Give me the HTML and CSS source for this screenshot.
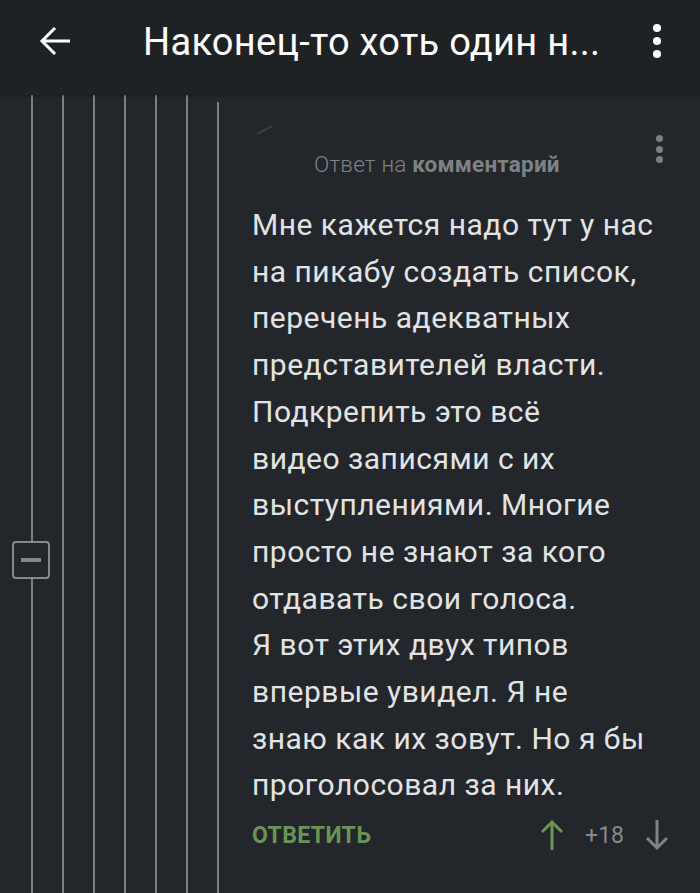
FILE: index.html
```html
<!DOCTYPE html>
<html lang="ru">
<head>
    <meta charset="UTF-8">
    <title>Наконец-то хоть один нормальный</title>
    <link rel="stylesheet" href="styles.css">
</head>
<body>
    <header class="topbar">
        <svg class="back" width="32" height="32" viewBox="0 0 32 32">
            <path d="M31 16H3M16 3L3 16l13 13" fill="none" stroke="#fff" stroke-width="3"/>
        </svg>
        <h1 class="title">Наконец-то хоть один н...</h1>
        <div class="kebab"><i></i><i></i><i></i></div>
    </header>

    <main class="thread">
        <div class="branches">
            <div class="branch"></div>
            <div class="branch"></div>
            <div class="branch"></div>
            <div class="branch"></div>
            <div class="branch"></div>
            <div class="branch"></div>
            <div class="branch short"></div>
            <div class="collapse"><span></span></div>
        </div>

        <article class="comment">
            <div class="comment-head">
                <span class="avatar-stub"></span>
                <span class="reply-to">Ответ на <b>комментарий</b></span>
                <div class="kebab small"><i></i><i></i><i></i></div>
            </div>
            <p class="comment-text">Мне кажется надо тут у нас<br>на пикабу создать список,<br>перечень адекватных<br>представителей власти.<br>Подкрепить это всё<br>видео записями с их<br>выступлениями. Многие<br>просто не знают за кого<br>отдавать свои голоса.<br>Я вот этих двух типов<br>впервые увидел. Я не<br>знаю как их зовут. Но я бы<br>проголосовал за них.</p>
            <div class="actions">
                <span class="reply">ОТВЕТИТЬ</span>
                <div class="votes">
                    <svg width="24" height="32" viewBox="0 0 24 32">
                        <path d="M12 31V3M2 13L12 3l10 10" fill="none" stroke="#6a9456" stroke-width="3"/>
                    </svg>
                    <span class="rating">+18</span>
                    <svg width="24" height="32" viewBox="0 0 24 32">
                        <path d="M12 1v28M2 19l10 10 10-10" fill="none" stroke="#808387" stroke-width="3"/>
                    </svg>
                </div>
            </div>
        </article>
    </main>
</body>
</html>
```

FILE: styles.css
```css
body {
    margin: 0;
    background: #23272b;
    font-family: Roboto, "Noto Sans", sans-serif;
    color: #e2e3e4;
    height: 893px;
    display: flex;
    flex-direction: column;
    overflow: hidden;
}

.topbar {
    height: 95px;
    flex-shrink: 0;
    background: #1f2225;
    display: flex;
    align-items: center;
    padding: 0 0 0 39px;
    box-shadow: 0 1px 3px rgba(0, 0, 0, 0.35);
    position: relative;
    z-index: 1;
}

.back {
    margin-top: -14px;
}

.title {
    margin: -12px 0 0 72px;
    font-weight: 400;
    font-size: 38px;
    color: #fff;
    letter-spacing: 0.3px;
    flex: 1;
    white-space: nowrap;
}

.kebab {
    display: flex;
    flex-direction: column;
    gap: 5px;
    width: 8px;
    margin: -14px 39px 0 0;
}

.kebab i {
    width: 8px;
    height: 8px;
    border-radius: 50%;
    background: #fff;
}

.kebab.small {
    gap: 3.5px;
    width: 7px;
    margin: 0;
}

.kebab.small i {
    width: 7px;
    height: 7px;
    background: #7c7f83;
}

.thread {
    flex: 1;
    display: flex;
}

.branches {
    position: relative;
    display: flex;
    flex-shrink: 0;
    padding-left: 31px;
}

.branch {
    width: 31px;
    box-sizing: border-box;
    border-left: 2px solid #7d8185;
}

.branch.short {
    width: 2px;
    margin-top: 7px;
}

.collapse {
    position: absolute;
    left: 12px;
    top: 446px;
    width: 34px;
    height: 34px;
    border: 2px solid #85888c;
    border-radius: 4px;
    background: #23272b;
    display: flex;
    align-items: center;
    justify-content: center;
}

.collapse span {
    width: 20px;
    height: 4px;
    background: #85888c;
}

.comment {
    flex: 1;
    padding: 0 37px 0 33px;
    display: flex;
    flex-direction: column;
}

.comment-head {
    position: relative;
    display: flex;
    align-items: flex-start;
    height: 107px;
}

.avatar-stub {
    position: absolute;
    left: 4px;
    top: 34px;
    width: 17px;
    height: 2px;
    background: #31453a;
    transform: rotate(-28deg);
}

.reply-to {
    margin: 56px 0 0 62px;
    font-size: 22.5px;
    font-weight: 300;
    letter-spacing: 0.2px;
    color: #7f8285;
}

.reply-to b {
    font-weight: 700;
}

.comment-head .kebab {
    position: absolute;
    right: 0;
    top: 40px;
}

.comment-text {
    margin: 0;
    font-size: 30px;
    line-height: 46.7px;
    letter-spacing: 0.5px;
    white-space: nowrap;
}

.actions {
    display: flex;
    align-items: center;
    justify-content: space-between;
    margin-top: 10px;
}

.reply {
    font-size: 23px;
    font-weight: 700;
    letter-spacing: 0.4px;
    color: #6a9456;
}

.votes {
    display: flex;
    align-items: center;
    gap: 21px;
    margin-right: -6px;
}

.rating {
    font-size: 23px;
    font-weight: 400;
    color: #86898d;
}
```
